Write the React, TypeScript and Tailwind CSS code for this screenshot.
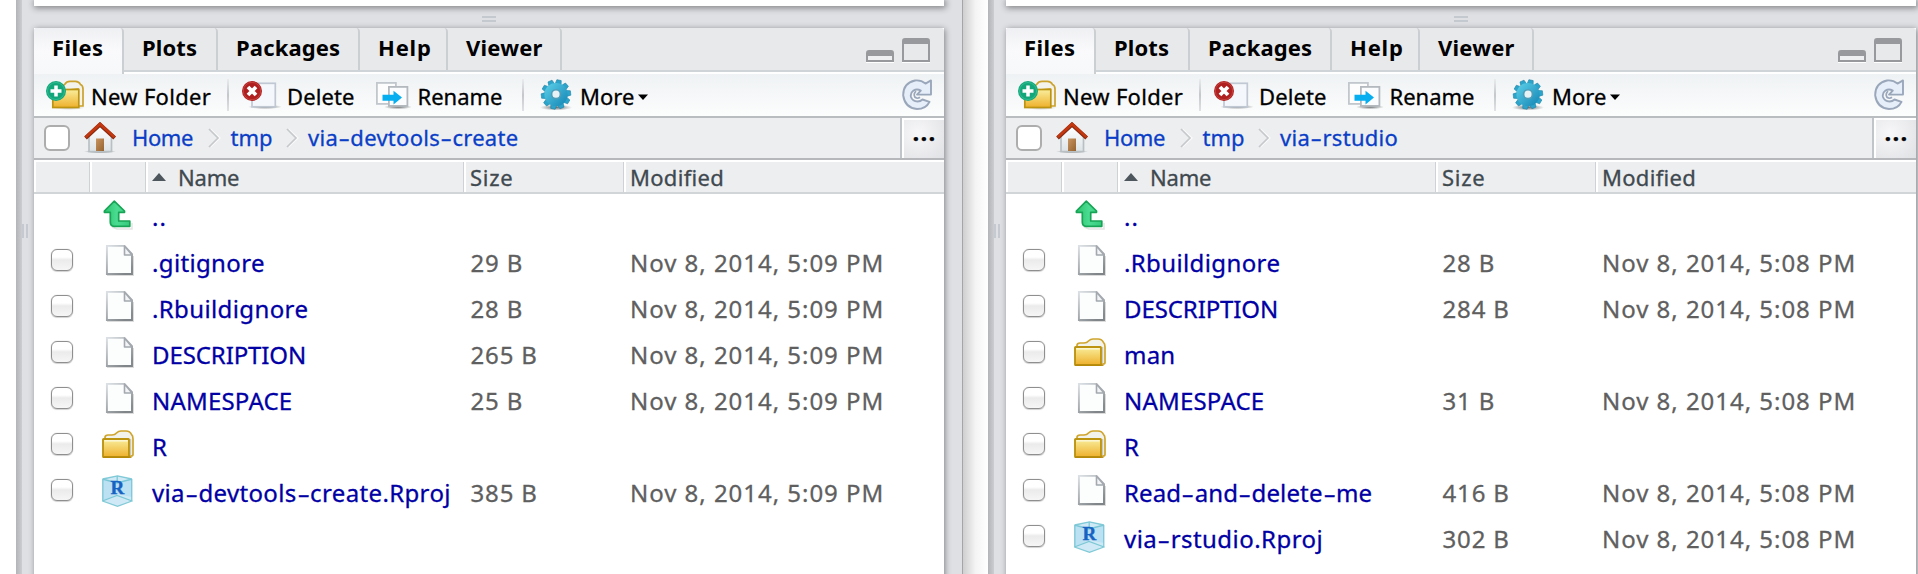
import React from "react";

type Kind = "up" | "file" | "folder" | "rproj";
type Row = { kind: Kind; name: string; size?: string; modified?: string; track?: string };

function Label({ text }: { text: string }) {
  const parts = text.split("-");
  return (
    <>
      {parts.map((part, i) => (
        <React.Fragment key={i}>
          {i > 0 && <span className="inline-block w-[0.56em] scale-x-[1.6] text-center tracking-normal">-</span>}
          {part}
        </React.Fragment>
      ))}
    </>
  );
}

function Gradients() {
  return (
    <svg className="absolute h-0 w-0" aria-hidden="true">
      <defs>
        <linearGradient id="gold" x1="0" y1="0" x2="0" y2="1">
          <stop offset="0" stopColor="#f9ee9c" />
          <stop offset="1" stopColor="#eeb02c" />
        </linearGradient>
        <linearGradient id="paperEdge" x1="0" y1="0" x2="0.7" y2="1">
          <stop offset="0" stopColor="#dbe0e5" />
          <stop offset="1" stopColor="#80858a" />
        </linearGradient>
        <linearGradient id="teal" x1="0" y1="0" x2="1" y2="1">
          <stop offset="0" stopColor="#5fd2ea" />
          <stop offset="1" stopColor="#1284b4" />
        </linearGradient>
        <linearGradient id="greenArrow" x1="0" y1="0" x2="1" y2="0">
          <stop offset="0" stopColor="#2bc46d" />
          <stop offset="0.5" stopColor="#4bdc92" />
          <stop offset="1" stopColor="#36c97c" />
        </linearGradient>
        <linearGradient id="door" x1="0" y1="0" x2="1" y2="1">
          <stop offset="0" stopColor="#c99562" />
          <stop offset="1" stopColor="#95632f" />
        </linearGradient>
        <linearGradient id="wall" x1="0" y1="0" x2="0" y2="1">
          <stop offset="0" stopColor="#ffffff" />
          <stop offset="1" stopColor="#dde3e6" />
        </linearGradient>
        <radialGradient id="shade">
          <stop offset="0" stopColor="#3c4043" stopOpacity="0.75" />
          <stop offset="1" stopColor="#3c4043" stopOpacity="0" />
        </radialGradient>
      </defs>
    </svg>
  );
}

function FolderShape() {
  return (
    <>
      <path d="M3 9 V7.5 Q3 5 6 5 H10 Q13 5 14.5 3 Q16.5 1 19 1 H24 Q28 1 29.5 4.5 Q31 5.5 31 9 V24.5 Q31 26 29 26 H26 V9 Z" fill="#f3f3ee" stroke="#cfa52e" strokeWidth="1.7" />
      <path d="M28.6 9 V25" stroke="#c9c9c4" strokeWidth="1.2" />
      <rect x="1" y="9" width="26" height="18" rx="0.6" fill="url(#gold)" stroke="#bd9412" strokeWidth="1.9" />
      <path d="M2.4 10.8 H25.6" stroke="#fbf6cf" strokeWidth="1.6" />
      <path d="M1 27.2 H29.5" stroke="#b58708" strokeWidth="1.4" />
    </>
  );
}

function RowIcon({ kind }: { kind: Kind }) {
  if (kind === "up")
    return (
      <svg width="32" height="30" viewBox="0 0 32 30" className="mb-[4px] ml-[1px]">
        <path d="M9 27 L14 29 H29 V23" fill="none" stroke="#e3e5e4" strokeWidth="1.5" />
        <path d="M11.3 1.2 L21.5 11 V12.3 H15.7 V21 H26.8 V26.3 H11 Q7.3 26.3 7.3 22 V12.3 H1.4 V11 Z" fill="url(#greenArrow)" stroke="#18a456" strokeWidth="1.7" strokeLinejoin="round" />
      </svg>
    );
  if (kind === "file")
    return (
      <svg width="32" height="32" viewBox="0 0 32 32" className="mb-[6px]">
        <path d="M5 31.4 H31.5 V12" fill="none" stroke="#dcdcdc" strokeWidth="1.4" />
        <path d="M4.9 1.9 H22.5 L30 10.2 V30 H4.9 Z" fill="#fcfdfd" stroke="url(#paperEdge)" strokeWidth="1.9" />
        <path d="M22.5 2 V11 H30 Z" fill="#f2f4f6" stroke="#a3a9ae" strokeWidth="1.6" strokeLinejoin="round" />
      </svg>
    );
  if (kind === "folder")
    return (
      <svg width="32" height="28" viewBox="0 0 32 28" className="mb-[6px]">
        <FolderShape />
      </svg>
    );
  return (
    <svg width="31" height="32" viewBox="0 0 31 32" className="mb-[4px]">
      <path d="M0.5 4 L15.5 0.5 L30 4 V26 L15.5 31.5 L0.5 26 Z" fill="#cfeaf6" />
      <path d="M0.5 4 L15 7.5 L30 4 V22 L15 19 L0.5 26 Z" fill="#b4def1" opacity="0.75" />
      <path d="M0.5 4 L15.5 0.8 L30 4 M0.5 4 L15 8 L30 4 M0.8 4 V26 M29.8 4 V26 M0.5 26 L15 20.5 L30 26 L15.5 31.3 Z M15.2 0.5 V8" fill="none" stroke="#62bccb" strokeWidth="1.3" strokeOpacity="0.75" />
      <text x="15.4" y="19.3" textAnchor="middle" fontFamily="Liberation Serif, serif" fontWeight="bold" fontSize="19" fill="#1763c4" stroke="#1763c4" strokeWidth="0.4">R</text>
    </svg>
  );
}

function NewFolderIcon() {
  return (
    <svg width="40" height="32" viewBox="0 0 40 32">
      <ellipse cx="23" cy="28.5" rx="16" ry="2.5" fill="url(#shade)" opacity="0.5" />
      <path d="M12 12 L19 5 Q20.5 2.3 24 2.3 H29.5 Q33 2.3 34.5 5.5 Q37 6.5 37 10 V27 H32 V10 Z" fill="#f3f3ec" stroke="#cba22e" strokeWidth="1.7" />
      <rect x="6.8" y="10.5" width="26" height="18" fill="url(#gold)" stroke="#bd9412" strokeWidth="1.7" />
      <circle cx="10" cy="12" r="10" fill="#13a67a" />
      <circle cx="10" cy="12" r="8.5" fill="none" stroke="#2fbd92" strokeWidth="1" />
      <path d="M10 6.5 V17.5 M4.5 12 H15.5" stroke="#fff" strokeWidth="3.5" />
    </svg>
  );
}

function DeleteIcon() {
  return (
    <svg width="40" height="32" viewBox="0 0 40 32">
      <ellipse cx="23" cy="27.8" rx="17" ry="2.3" fill="url(#shade)" />
      <rect x="10" y="4.3" width="23.3" height="23.5" fill="#f4f7fb" stroke="#c0c8d4" strokeWidth="1.7" />
      <circle cx="10" cy="12" r="10" fill="#b01f1f" />
      <circle cx="10" cy="12" r="8.7" fill="none" stroke="#c94a45" strokeWidth="0.8" />
      <path d="M6 8 L14 16 M14 8 L6 16" stroke="#fff" strokeWidth="3.8" />
    </svg>
  );
}

function RenameIcon() {
  return (
    <svg width="36" height="32" viewBox="0 0 36 32">
      <ellipse cx="22" cy="28" rx="14" ry="2.3" fill="url(#shade)" />
      <rect x="0.9" y="3.9" width="19" height="21" fill="#fdfdfe" stroke="#c1c7cd" strokeWidth="1.8" />
      <rect x="12.9" y="7.9" width="18.5" height="19" fill="#fbfcfe" stroke="#b3b9bf" strokeWidth="1.8" />
      <path d="M6.5 15.8 H17.5 V11.8 L26 18.6 L17.5 25.4 V21.8 H6.5 Z" fill="#06aef0" />
    </svg>
  );
}

function GearIcon() {
  const teeth = [0, 36, 72, 108, 144, 180, 216, 252, 288, 324];
  return (
    <svg width="34" height="32" viewBox="0 0 34 32">
      <ellipse cx="16" cy="28.5" rx="16" ry="3" fill="url(#shade)" />
      <g fill="#2ba4cb" stroke="#2384a5" strokeWidth="0.6">
        {teeth.map((a) => (
          <path key={a} d="M13 5 L13.8 0.8 H18.2 L19 5 Z" transform={`rotate(${a + 12} 16 15.5)`} />
        ))}
      </g>
      <circle cx="16" cy="15.5" r="11.6" fill="url(#teal)" />
      <circle cx="16" cy="15.2" r="4.4" fill="#e8f1f4" stroke="#4f9eb8" strokeWidth="1.6" />
    </svg>
  );
}

function RefreshIcon() {
  return (
    <svg width="32" height="32" viewBox="0 0 32 32">
      <path
        d="M23.5 4.6 L29 1.4 V15.6 H15 L18.8 11.6 Q15 9.4 11.5 11.5 Q8 14 9 18 Q10.5 22.3 15.5 22.5 Q18.5 22.5 20.5 20.5 L27.5 22.8 Q24 30 15 30 Q3 29 1.2 16.5 Q1 4 13 1.5 Q19 0.8 23.5 4.6 Z"
        fill="#e6eefa" stroke="#9aa7bb" strokeWidth="1.9" strokeLinejoin="round"
      />
      <path d="M14 12.2 Q11 15 13 18.3 Q15.5 20.2 18 18.3" fill="none" stroke="#9aa7bb" strokeWidth="1.7" />
    </svg>
  );
}

function HomeIcon() {
  return (
    <svg width="34" height="32" viewBox="0 0 34 32">
      <ellipse cx="16" cy="29.5" rx="16" ry="1.8" fill="url(#shade)" />
      <path d="M5 14 L16 4 L27.5 14 V29.5 H5 Z" fill="url(#wall)" stroke="#b9c0c4" strokeWidth="1.7" />
      <rect x="12" y="16.5" width="8" height="12.5" fill="url(#door)" />
      <path d="M1.5 16 L16 2.5 L30.7 16" fill="none" stroke="#8d2a10" strokeWidth="4" />
      <path d="M1.8 15.2 L16 2 L30.4 15.2" fill="none" stroke="#c5380f" strokeWidth="2.4" />
    </svg>
  );
}

function Chevron() {
  return (
    <svg width="13" height="20" viewBox="0 0 13 20" fill="none">
      <path d="M2.5 1.5 L11.5 10 L2.5 18.5" stroke="#fafafa" strokeWidth="2" />
      <path d="M1 1 L10 10 L1 19" stroke="#c6c9cc" strokeWidth="1.7" />
    </svg>
  );
}

function Tab({ label, className }: { label: string; className: string }) {
  return (
    <div className={`flex h-[42px] shrink-0 items-center rounded-tr-[4px] border-r-2 border-[#cccfd2] pb-[5px] pl-[18px] font-bold ${className}`}>
      {label}
    </div>
  );
}

function HeaderCell({ className, children }: { className: string; children?: React.ReactNode }) {
  return (
    <div className={`flex h-full shrink-0 items-center border-l-2 border-l-white ${className}`}>{children}</div>
  );
}

function FilesPane({ folder, folderTrack, rows }: { folder: string; folderTrack: string; rows: Row[] }) {
  return (
    <div className="flex h-[574px] w-[946px] shrink-0 bg-[#dfe0e4]">
      <div className="flex w-[18px] shrink-0">
        <div className="w-[6px] bg-linear-to-r from-[#b3b4b7] to-[#cccdd1]" />
        <div className="flex gap-[2px] pt-[224px]">
          <div className="h-[14px] w-[2px] bg-[#c5c9d0]" />
          <div className="h-[14px] w-[2px] bg-[#c5c9d0]" />
        </div>
      </div>
      <div className="flex w-[910px] shrink-0 flex-col">
        <div className="h-[6px] shrink-0 bg-white shadow-[1px_1px_6px_1px_rgba(0,0,0,0.42)]" />
        <div className="flex h-[22px] shrink-0 flex-col items-center gap-[2px] pt-[10px]">
          <div className="h-[2px] w-[14px] bg-[#c4c9cf]" />
          <div className="h-[2px] w-[14px] bg-[#c4c9cf]" />
        </div>
        <div className="h-[570px] shrink-0 bg-white text-[22px] leading-[30px] whitespace-nowrap text-black shadow-[1px_1px_6px_rgba(0,0,0,0.42)]">
          <div className="flex h-[46px] items-start rounded-t-[3px] bg-[linear-gradient(to_bottom,#e8e9eb_42px,#cfd4d8_42px,#cfd4d8_44px,#ffffff_44px)]">
            <div className="flex h-[46px] w-[90px] shrink-0 items-center rounded-t-[4px] border-r-2 border-[#cccfd2] bg-linear-to-b from-[#eff0f3] via-[#fafafc] to-[#f6f8f9] pb-[9px] pl-[18px] font-bold tracking-[0.4px]">
              Files
            </div>
            <Tab label="Plots" className="w-[94px] tracking-[0.1px]" />
            <Tab label="Packages" className="w-[142px] tracking-[0.15px]" />
            <Tab label="Help" className="w-[88px] tracking-[0.8px]" />
            <Tab label="Viewer" className="w-[114px] tracking-[0.2px]" />
            <div className="ml-auto flex items-end gap-[8px] pt-[10px] pr-[14px]">
              <div className="h-[12px] w-[28px] rounded-t-[3px] border-2 border-t-[6px] border-[#97999c] bg-[#eff0f1] shadow-[0_1px_0_#fff]" />
              <div className="h-[24px] w-[28px] rounded-t-[3px] border-2 border-t-[6px] border-[#97999c] shadow-[0_1px_0_#fff]" />
            </div>
          </div>

          <div className="flex h-[44px] items-center border-b-2 border-[#b9bdc0] bg-linear-to-b from-[#eff2f4] to-[#fcfdfd] pl-[12px] [-webkit-text-stroke:0.3px]">
            <div className="flex w-[181px] items-center">
              <NewFolderIcon />
              <span className="ml-[5px] pt-px tracking-[0.3px]">New Folder</span>
            </div>
            <div className="h-[32px] w-[2px] bg-linear-to-b from-[#e9ebed] via-[#c5c8cb] to-[#e0e2e4]" />
            <div className="ml-[13px] flex w-[134px] items-center">
              <DeleteIcon />
              <span className="ml-[5px] pt-px tracking-[0.1px]">Delete</span>
            </div>
            <div className="flex w-[146px] items-center">
              <RenameIcon />
              <span className="ml-[5.5px] pt-px">Rename</span>
            </div>
            <div className="h-[32px] w-[2px] bg-linear-to-b from-[#e9ebed] via-[#c5c8cb] to-[#e0e2e4]" />
            <div className="ml-[16px] flex items-center">
              <GearIcon />
              <span className="ml-[6px] pt-px">More</span>
              <svg width="12" height="8" viewBox="0 0 12 8" className="mt-[3px] ml-[3px]">
                <path d="M1 1.5 H11 L6 7 Z" fill="#000" />
              </svg>
            </div>
            <div className="mr-[10px] ml-auto">
              <RefreshIcon />
            </div>
          </div>

          <div className="flex h-[42px] items-center border-b-2 border-[#b5b7ba] bg-[#edeef0] text-[#0b3ec6] [-webkit-text-stroke:0.3px]">
            <div className="ml-[10px] h-[26px] w-[26px] rounded-[6px] border-2 border-[#adadad] bg-white" />
            <div className="ml-[14px] w-[34px]">
              <HomeIcon />
            </div>
            <span className="ml-[14px] w-[76px] pb-[2px] tracking-[-0.4px]">Home</span>
            <Chevron />
            <span className="ml-[9.5px] w-[55.5px] pb-[2px]">tmp</span>
            <Chevron />
            <span className={`ml-[9px] pb-[2px] ${folderTrack}`}>
              <Label text={folder} />
            </span>
            <div className="ml-auto flex h-full w-[44px] border-l-2 border-[#c0c5ca]">
              <div className="flex flex-1 items-center justify-center border-t-2 border-l-2 border-white bg-[radial-gradient(circle_at_35%_35%,#f7f7f9,#e0e1e4)] pb-[14px] pl-px text-[24px] font-bold tracking-[1.2px] text-black">
                ...
              </div>
            </div>
          </div>

          <div className="flex h-[34px] items-center border-t-2 border-b-2 border-t-white border-b-[#d2d5d8] bg-[#edeef0] text-[#3f494f] [-webkit-text-stroke:0.3px]">
            <HeaderCell className="w-[56px] border-r border-r-[#cfd2d5]" />
            <HeaderCell className="w-[56px] border-r border-r-[#cfd2d5]" />
            <HeaderCell className="w-[318px] border-r border-r-[#cfd2d5]">
              <svg width="14" height="8" viewBox="0 0 14 8" className="ml-[4px]">
                <path d="M7 0 L14 8 H0 Z" fill="#4c565c" />
              </svg>
              <span className="ml-[12px] tracking-[-0.2px]">Name</span>
            </HeaderCell>
            <HeaderCell className="w-[160px] border-r border-r-[#cfd2d5]">
              <span className="ml-[4px] tracking-[0.7px]">Size</span>
            </HeaderCell>
            <HeaderCell className="w-[320px]">
              <span className="ml-[4px] tracking-[0.3px]">Modified</span>
            </HeaderCell>
          </div>

          {rows.map((row) => (
            <div key={row.name} className="flex h-[46px] items-center text-[24px] text-[#5f5f5f] [-webkit-text-stroke:0.3px]">
              <div className="w-[68px] shrink-0 pl-[17px]">
                {row.kind !== "up" && (
                  <div className="mb-[6px] h-[22px] w-[22px] rounded-[6px] border border-[#8f8f8f] bg-[linear-gradient(to_bottom,#ffffff_35%,#ebebeb_50%,#f6f6f6)] shadow-[0_0_1px_rgba(0,0,0,0.35),0_1px_1px_rgba(0,0,0,0.15)]" />
                )}
              </div>
              <div className="w-[50px] shrink-0">
                <RowIcon kind={row.kind} />
              </div>
              <span className={`w-[318.5px] shrink-0 text-[#0000a4] ${row.track ?? ""}`}>
                <Label text={row.name} />
              </span>
              <span className="w-[159.5px] shrink-0 tracking-[0.85px]">{row.size}</span>
              <span className="tracking-[0.97px]">{row.modified}</span>
            </div>
          ))}
        </div>
      </div>
    </div>
  );
}

const nine = "Nov 8, 2014, 5:09 PM";
const eight = "Nov 8, 2014, 5:08 PM";

const devtoolsRows: Row[] = [
  { kind: "up", name: "..", track: "tracking-[1px]" },
  { kind: "file", name: ".gitignore", size: "29 B", modified: nine, track: "tracking-[0.35px]" },
  { kind: "file", name: ".Rbuildignore", size: "28 B", modified: nine, track: "tracking-[0.38px]" },
  { kind: "file", name: "DESCRIPTION", size: "265 B", modified: nine, track: "tracking-[-0.1px]" },
  { kind: "file", name: "NAMESPACE", size: "25 B", modified: nine, track: "tracking-[0.2px]" },
  { kind: "folder", name: "R" },
  { kind: "rproj", name: "via-devtools-create.Rproj", size: "385 B", modified: nine, track: "tracking-[0.36px]" },
];

const rstudioRows: Row[] = [
  { kind: "up", name: "..", track: "tracking-[1px]" },
  { kind: "file", name: ".Rbuildignore", size: "28 B", modified: eight, track: "tracking-[0.38px]" },
  { kind: "file", name: "DESCRIPTION", size: "284 B", modified: eight, track: "tracking-[-0.1px]" },
  { kind: "folder", name: "man", track: "tracking-[0.2px]" },
  { kind: "file", name: "NAMESPACE", size: "31 B", modified: eight, track: "tracking-[0.2px]" },
  { kind: "folder", name: "R" },
  { kind: "file", name: "Read-and-delete-me", size: "416 B", modified: eight, track: "tracking-[0.13px]" },
  { kind: "rproj", name: "via-rstudio.Rproj", size: "302 B", modified: eight, track: "tracking-[0.45px]" },
];

export default function App() {
  return (
    <div className="flex h-[574px] w-full overflow-hidden bg-white pl-[16px] font-['Noto_Sans',sans-serif]">
      <Gradients />
      <FilesPane folder="via-devtools-create" folderTrack="tracking-[0.28px]" rows={devtoolsRows} />
      <div className="w-[26px] shrink-0 border-l border-[#a5a5a7] bg-linear-to-r from-[#cfcfcf] via-[#f4f4f4] to-white" />
      <FilesPane folder="via-rstudio" folderTrack="tracking-[0.3px]" rows={rstudioRows} />
    </div>
  );
}
